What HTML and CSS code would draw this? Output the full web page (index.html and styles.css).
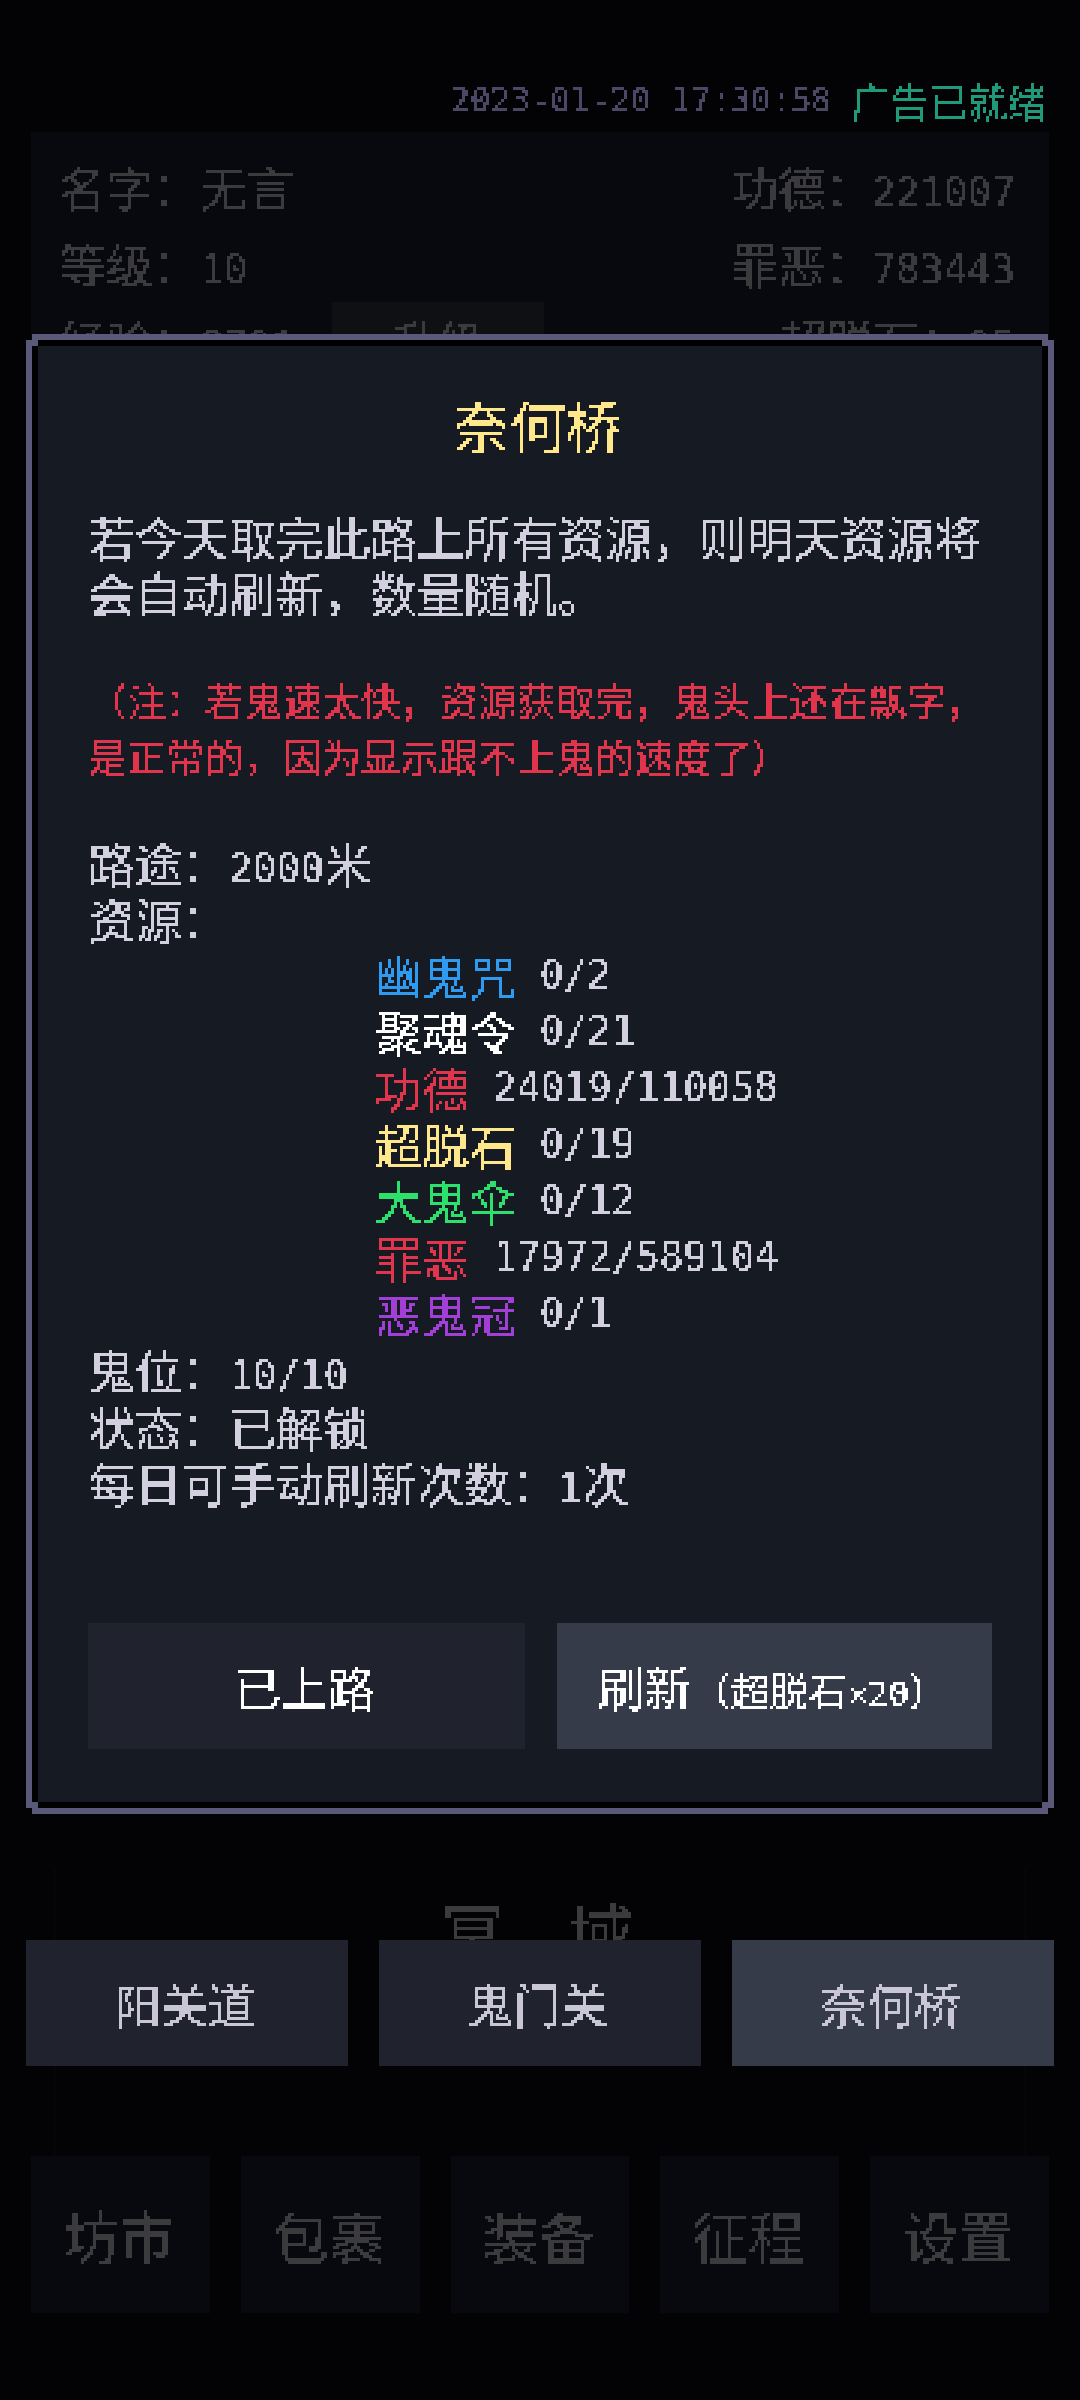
FILE: index.html
```html
<!DOCTYPE html>
<html lang="zh-CN">
<head>
    <meta charset="UTF-8">
    <meta name="viewport" content="width=device-width, initial-scale=1.0">
    <title>奈何桥</title>
    <link rel="stylesheet" href="styles.css">
</head>
<body>
    <!-- pixel look for the text, there is no bitmap font to use -->
    <svg class="defs" width="0" height="0">
        <filter id="pixel" x="0" y="0" width="100%" height="100%" color-interpolation-filters="sRGB">
            <feFlood x="1" y="1" width="1" height="1"/>
            <feComposite width="3" height="3"/>
            <feTile result="grid"/>
            <feComposite in="SourceGraphic" in2="grid" operator="in"/>
            <feMorphology operator="dilate" radius="1"/>
            <feComponentTransfer>
                <feFuncA type="discrete" tableValues="0 1 1"/>
            </feComponentTransfer>
        </filter>
    </svg>

    <div class="page">
        <div class="topbar">
            <span class="clock">2023-01-20 17:30:58</span>
            <span class="ad-ready">广告已就绪</span>
        </div>

        <div class="info">
            <div class="info-row">
                <span class="txt">名字：无言</span>
                <span class="txt">功德：<i class="num">221007</i></span>
            </div>
            <div class="info-row">
                <span class="txt">等级：<i class="num">10</i></span>
                <span class="txt">罪恶：<i class="num">783443</i></span>
            </div>
            <div class="info-row">
                <div class="exp">
                    <span class="txt">经验：<i class="num">8781</i></span>
                    <span class="upgrade"><span class="txt">升级</span></span>
                </div>
                <span class="txt">超脱石：<i class="num">95</i></span>
            </div>
        </div>

        <div class="realm">
            <div class="realm-title">冥　域</div>
        </div>

        <div class="nav">
            <div class="nav-item"><span class="txt">坊市</span></div>
            <div class="nav-item"><span class="txt">包裹</span></div>
            <div class="nav-item"><span class="txt">装备</span></div>
            <div class="nav-item"><span class="txt">征程</span></div>
            <div class="nav-item"><span class="txt">设置</span></div>
        </div>
    </div>

    <div class="mask">
        <div class="dialog">
            <h2 class="dialog-title">奈何桥</h2>
            <p class="lead">若今天取完此路上所有资源，则明天资源将会自动刷新，数量随机。</p>
            <p class="note">（注：若鬼速太快，资源获取完，鬼头上还在飘字，是正常的，因为显示跟不上鬼的速度了）</p>

            <div class="stats">
                <div class="line">路途：<i class="num">2000</i>米</div>
                <div class="line">资源：</div>
                <div class="line res"><span class="blue">幽鬼咒</span><i class="num">0/2</i></div>
                <div class="line res"><span class="white">聚魂令</span><i class="num">0/21</i></div>
                <div class="line res"><span class="red">功德</span><i class="num">24019/110058</i></div>
                <div class="line res"><span class="yellow">超脱石</span><i class="num">0/19</i></div>
                <div class="line res"><span class="green">大鬼伞</span><i class="num">0/12</i></div>
                <div class="line res"><span class="red">罪恶</span><i class="num">17972/589104</i></div>
                <div class="line res"><span class="purple">恶鬼冠</span><i class="num">0/1</i></div>
                <div class="line">鬼位：<i class="num">10/10</i></div>
                <div class="line">状态：已解锁</div>
                <div class="line">每日可手动刷新次数：<i class="num">1</i>次</div>
            </div>

            <div class="dialog-btns">
                <button class="btn"><span class="txt">已上路</span></button>
                <button class="btn btn-active"><span class="txt">刷新<small class="cost">（超脱石<i class="num">×20</i>）</small></span></button>
            </div>
        </div>

        <div class="roads">
            <button class="road"><span class="txt">阳关道</span></button>
            <button class="road"><span class="txt">鬼门关</span></button>
            <button class="road road-active"><span class="txt">奈何桥</span></button>
        </div>
    </div>
</body>
</html>
```

FILE: styles.css
```css
/* General Styling */
* {
    margin: 0;
    padding: 0;
    box-sizing: border-box;
}

html, body {
    height: 2400px;
    overflow: hidden;
}

body {
    position: relative;
    width: 1080px;
    background: #030305;
    font-family: "Noto Sans CJK SC", "Noto Sans", sans-serif;
    font-size: 47px;
    line-height: 1.2;
    color: #3b3b3e;
}

.defs {
    position: absolute;
}

i {
    font-style: normal;
}

.num {
    font-family: "DejaVu Sans Mono", monospace;
    font-size: 39.5px;
    line-height: 1;
}

/* everything that gets the pixel look */
.txt, .clock, .ad-ready, .realm-title, .dialog-title, .lead, .note, .line {
    display: block;
    filter: url(#pixel);
}

/* Page under the mask */
.page {
    padding: 69px 31px 0;
}

.topbar {
    display: flex;
    justify-content: flex-end;
    align-items: center;
    gap: 20px;
    height: 63px;
    padding-right: 3px;
}

.clock {
    font-family: "DejaVu Sans Mono", monospace;
    font-size: 33.3px;
    color: #4a4865;
}

.ad-ready {
    font-size: 39px;
    color: #1f9a7a;
}

.info {
    height: 300px;
    padding: 26px 34px 0 28px;
    background: #07090e;
}

.info-row {
    display: flex;
    justify-content: space-between;
    align-items: flex-start;
    height: 77px;
}

.exp {
    display: flex;
    align-items: flex-start;
    gap: 37px;
}

.upgrade {
    width: 212px;
    height: 100px;
    margin-top: -10px;
    padding-top: 10px;
    background: #0e1014;
    text-align: center;
}

.realm {
    width: 972px;
    height: 289px;
    margin: 1435px auto 0;
    padding-top: 27px;
    padding-right: 6px;
    border-left: 1px solid #08080b;
    border-right: 1px solid #08080b;
}

.realm-title {
    font-size: 64px;
    line-height: 72px;
    text-align: center;
}

.nav {
    display: flex;
    gap: 31px;
}

.nav-item {
    flex: 1;
    display: flex;
    justify-content: center;
    align-items: center;
    height: 157px;
    padding-right: 3px;
    background: #07090e;
    font-size: 56px;
}

/* Mask + dialog */
.mask {
    position: absolute;
    top: 0;
    left: 0;
    width: 100%;
    height: 100%;
    padding: 340px 26px 0;
}

.dialog {
    position: relative;
    margin: 0 6px;
    height: 1468px;
    padding: 50px 50px 0;
    background: #161a22;
    border: 6px solid #000;
    box-shadow: 0 -6px 0 #5b5979, 0 6px 0 #5b5979, -6px 0 0 #5b5979, 6px 0 0 #5b5979;
    color: #d2d0df;
}

/* inner corner pixels of the frame */
.dialog::before {
    content: "";
    position: absolute;
    top: -6px;
    left: -6px;
    right: -6px;
    bottom: -6px;
    --px: linear-gradient(#5b5979, #5b5979);
    background:
        var(--px) left top / 6px 6px no-repeat,
        var(--px) right top / 6px 6px no-repeat,
        var(--px) left bottom / 6px 6px no-repeat,
        var(--px) right bottom / 6px 6px no-repeat;
}

.dialog-title {
    padding-right: 5px;
    font-size: 56px;
    font-weight: 400;
    line-height: 56px;
    text-align: center;
    color: #ffe78c;
}

.lead {
    margin-top: 56px;
}

.note {
    margin-top: 50px;
    font-size: 39px;
    line-height: 56px;
    color: #e0354c;
}

.stats {
    margin-top: 51px;
}

.line {
    height: 56.4px;
}

.res {
    display: flex;
    align-items: center;
    gap: 24px;
    padding-left: 287px;
}

.res .num {
    color: #d2d0df;
}

.blue { color: #2f9bf0; }
.white { color: #ffffff; }
.red { color: #e0354c; }
.yellow { color: #ffe78c; }
.green { color: #2de06c; }
.purple { color: #a23fd6; }

.dialog-btns {
    display: flex;
    gap: 32px;
    margin-top: 113px;
}

button {
    font: inherit;
    border: none;
    color: inherit;
}

.btn {
    flex: 1;
    height: 126px;
    padding-right: 4px;
    background: #20232d;
    color: #fff;
}

.btn-active {
    padding-right: 3px;
    background: #363b4a;
}

.cost {
    font-size: 39px;
}

.cost .num {
    font-size: 34px;
}

.roads {
    display: flex;
    gap: 31px;
    margin-top: 132px;
}

.road {
    flex: 1;
    height: 126px;
    padding-right: 5px;
    background: #20232d;
    color: #c9c6d6;
}

.road-active {
    background: #363b4a;
}
```
